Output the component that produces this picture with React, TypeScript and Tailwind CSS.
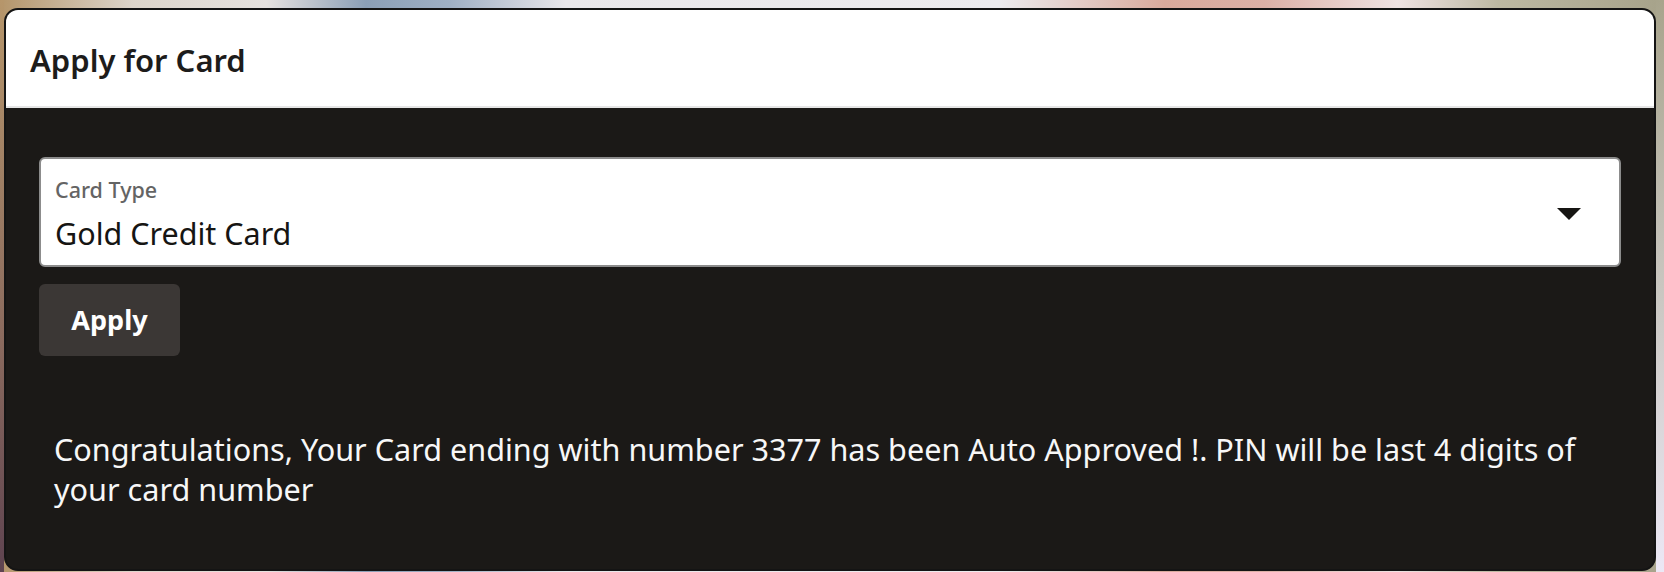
import React from "react";

const font = { fontFamily: '"Noto Sans", "Open Sans", sans-serif' };

function CardTypeSelect() {
  return (
    <div className="flex items-center rounded-[6px] border-2 border-[#8c8c8c] bg-white pl-[14px] pr-[38px] pt-[17px] pb-[12px]">
      <div className="flex-1">
        <div className="text-[21.5px] font-medium leading-[28px] text-[#646464]">Card Type</div>
        <div className="mt-[9px] text-[30.5px] leading-[40px] text-[#161513]">Gold Credit Card</div>
      </div>
      <svg width="24" height="12" viewBox="0 0 24 12" className="mb-[2px]">
        <polygon points="0,0 24,0 12,12" fill="#161513" />
      </svg>
    </div>
  );
}

export default function App() {
  return (
    <div
      style={font}
      className="h-[572px] bg-no-repeat pt-[8px] pl-[4px] pr-[8px] pb-[1px] bg-[linear-gradient(180deg,#b6966b,#8a6a5e_60%,#5e4350),linear-gradient(180deg,#a8a48c,#c9c6c0_50%,#ece8f5),linear-gradient(90deg,#b4956a,#ddd5cb_8%,#e6e2df_16%,#8b9fb6_22%,#9fb0c4_27%,#e9e7ea_34%,#ecebee_60%,#d9aa9c_70%,#dcb0a6_76%,#efe3e3_84%,#bdb9a2_90%,#a6a28a)] [background-size:4px_100%,8px_100%,100%_100%] [background-position:left_top,right_top,left_top]"
    >
      <div className="flex h-full flex-col overflow-hidden rounded-[14px] border-2 border-[#141414] bg-[#1b1917]">
        <div className="flex h-[98px] items-center border-b-2 border-[#e6e6e6] bg-white px-[24px] pt-[4px]">
          <h1 className="text-[31px] font-semibold leading-[40px] text-[#1d1c1b]">Apply for Card</h1>
        </div>
        <div className="flex-1 px-[33px] pt-[49px]">
          <CardTypeSelect />
          <button className="mt-[17px] h-[72px] w-[141px] rounded-[6px] bg-[#3b3735] text-[27px] font-bold text-white">
            Apply
          </button>
          <p className="mt-[73px] pl-[15px] pr-[30px] text-[30.6px] leading-[40px] text-[#f7f7f7]">
            Congratulations, Your Card ending with number 3377 has been Auto Approved !. PIN will be last 4 digits of your card number
          </p>
        </div>
      </div>
    </div>
  );
}
